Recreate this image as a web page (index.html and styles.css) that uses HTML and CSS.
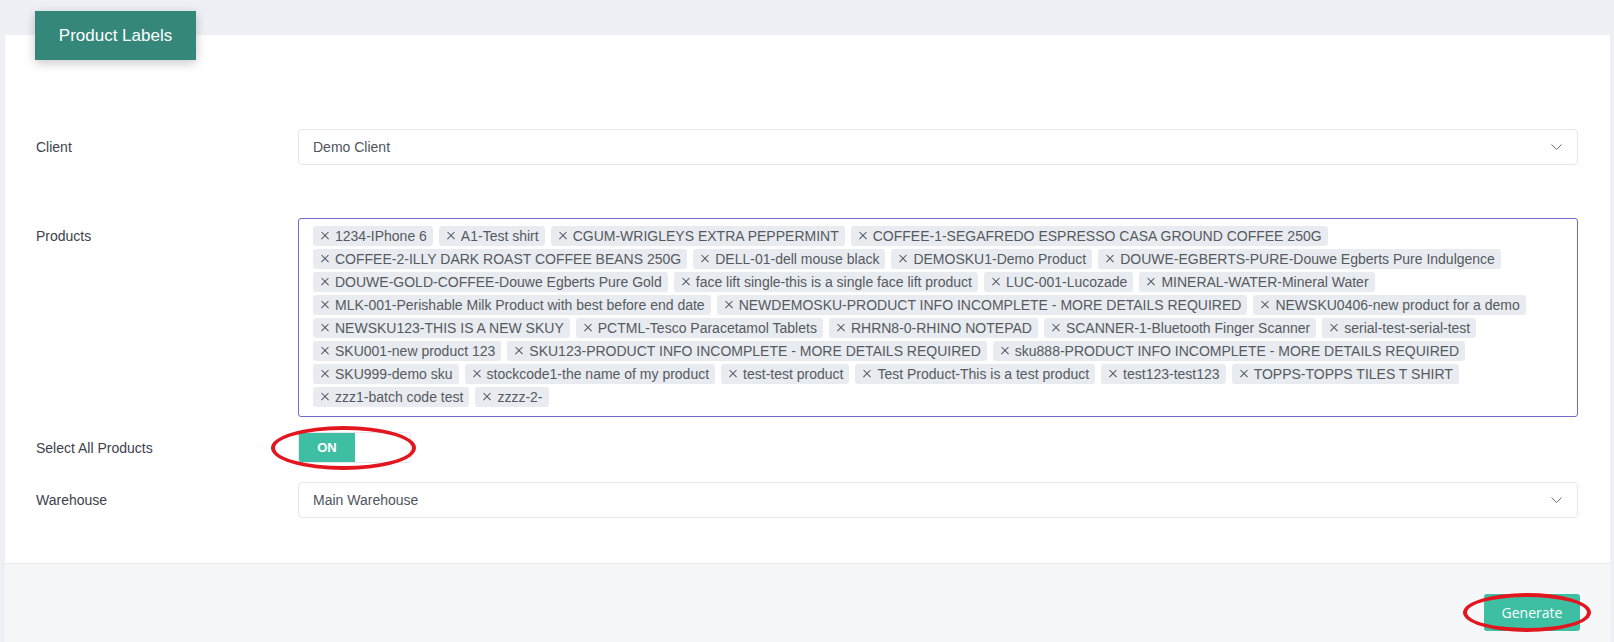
FILE: index.html
```html
<!DOCTYPE html>
<html lang="en">
<head>
    <meta charset="UTF-8">
    <meta name="viewport" content="width=device-width, initial-scale=1.0">
    <title>Product Labels</title>
    <link rel="stylesheet" href="styles.css">
</head>

<body>
    <div class="card">
        <div class="card-tab">Product Labels</div>

        <div class="card-body">
            <div class="form-row row-client">
                <label>Client</label>
                <div class="select">
                    <span>Demo Client</span>
                    <svg class="chevron" width="11" height="6" viewBox="0 0 11 6"><polyline points="0.5,0.5 5.5,5.5 10.5,0.5" fill="none" stroke="#6b6f76" stroke-width="1"/></svg>
                </div>
            </div>

            <div class="form-row row-products">
                <label>Products</label>
                <div class="multi-select">
                    <span class="tag"><i></i>1234-IPhone 6</span>
                    <span class="tag"><i></i>A1-Test shirt</span>
                    <span class="tag"><i></i>CGUM-WRIGLEYS EXTRA PEPPERMINT</span>
                    <span class="tag"><i></i>COFFEE-1-SEGAFREDO ESPRESSO CASA GROUND COFFEE 250G</span>
                    <span class="tag"><i></i>COFFEE-2-ILLY DARK ROAST COFFEE BEANS 250G</span>
                    <span class="tag"><i></i>DELL-01-dell mouse black</span>
                    <span class="tag"><i></i>DEMOSKU1-Demo Product</span>
                    <span class="tag"><i></i>DOUWE-EGBERTS-PURE-Douwe Egberts Pure Indulgence</span>
                    <span class="tag"><i></i>DOUWE-GOLD-COFFEE-Douwe Egberts Pure Gold</span>
                    <span class="tag"><i></i>face lift single-this is a single face lift product</span>
                    <span class="tag"><i></i>LUC-001-Lucozade</span>
                    <span class="tag"><i></i>MINERAL-WATER-Mineral Water</span>
                    <span class="tag"><i></i>MLK-001-Perishable Milk Product with best before end date</span>
                    <span class="tag"><i></i>NEWDEMOSKU-PRODUCT INFO INCOMPLETE - MORE DETAILS REQUIRED</span>
                    <span class="tag"><i></i>NEWSKU0406-new product for a demo</span>
                    <span class="tag"><i></i>NEWSKU123-THIS IS A NEW SKUY</span>
                    <span class="tag"><i></i>PCTML-Tesco Paracetamol Tablets</span>
                    <span class="tag"><i></i>RHRN8-0-RHINO NOTEPAD</span>
                    <span class="tag"><i></i>SCANNER-1-Bluetooth Finger Scanner</span>
                    <span class="tag"><i></i>serial-test-serial-test</span>
                    <span class="tag"><i></i>SKU001-new product 123</span>
                    <span class="tag"><i></i>SKU123-PRODUCT INFO INCOMPLETE - MORE DETAILS REQUIRED</span>
                    <span class="tag"><i></i>sku888-PRODUCT INFO INCOMPLETE - MORE DETAILS REQUIRED</span>
                    <span class="tag"><i></i>SKU999-demo sku</span>
                    <span class="tag"><i></i>stockcode1-the name of my product</span>
                    <span class="tag"><i></i>test-test product</span>
                    <span class="tag"><i></i>Test Product-This is a test product</span>
                    <span class="tag"><i></i>test123-test123</span>
                    <span class="tag"><i></i>TOPPS-TOPPS TILES T SHIRT</span>
                    <span class="tag"><i></i>zzz1-batch code test</span>
                    <span class="tag"><i></i>zzzz-2-</span>
                </div>
            </div>

            <div class="form-row row-toggle">
                <label>Select All Products</label>
                <div class="marked">
                    <div class="switch">
                        <span class="switch-on">ON</span>
                        <span class="switch-knob"></span>
                    </div>
                    <span class="mark mark-toggle"></span>
                </div>
            </div>

            <div class="form-row row-warehouse">
                <label>Warehouse</label>
                <div class="select">
                    <span>Main Warehouse</span>
                    <svg class="chevron" width="11" height="6" viewBox="0 0 11 6"><polyline points="0.5,0.5 5.5,5.5 10.5,0.5" fill="none" stroke="#6b6f76" stroke-width="1"/></svg>
                </div>
            </div>
        </div>

        <div class="card-footer">
            <div class="marked">
                <button type="button" class="button">Generate</button>
                <span class="mark mark-button"></span>
            </div>
        </div>
    </div>
</body>
</html>
```

FILE: styles.css
```css
* {
    box-sizing: border-box;
}

body {
    font-family: 'Liberation Sans', Arial, sans-serif;
    background: #eef0f5;
    margin: 0;
    padding: 35px 4px 0 5px;
    overflow: hidden;
}

.card {
    position: relative;
    background: #ffffff;
}

.card-tab {
    position: absolute;
    top: -24px;
    left: 30px;
    width: 161px;
    height: 49px;
    background: #35877a;
    color: #ffffff;
    font-size: 17px;
    line-height: 49px;
    text-align: center;
    box-shadow: 0 3px 10px rgba(0, 0, 0, 0.22);
}

.card-body {
    padding: 94px 32px 45px 31px;
}

.form-row {
    display: grid;
    grid-template-columns: 262px 1fr;
}

.form-row label {
    font-size: 14px;
    line-height: 20px;
    padding-top: 8px;
    color: #3d414b;
}

.row-client {
    margin-bottom: 53px;
}

.row-products {
    margin-bottom: 15px;
}

.row-toggle {
    margin-bottom: 19px;
    align-items: center;
}

.row-toggle label {
    padding-top: 0;
}

.select {
    display: flex;
    align-items: center;
    justify-content: space-between;
    height: 36px;
    padding: 0 15px 0 14px;
    border: 1px solid #e5e7eb;
    border-radius: 4px;
    font-size: 14px;
    color: #50555d;
}

.chevron {
    display: block;
}

.multi-select {
    display: flex;
    flex-wrap: wrap;
    gap: 3px 6px;
    padding: 7px 14px 9px 14px;
    border: 1px solid #7469d0;
    border-radius: 3px;
}

.tag {
    display: flex;
    align-items: center;
    background: #e8ebef;
    border-radius: 3px;
    padding: 0 6px 0 8px;
    font-size: 14px;
    line-height: 20px;
    color: #555a61;
    white-space: nowrap;
}

/* close cross drawn with two thin bars */
.tag i {
    position: relative;
    display: block;
    width: 8px;
    height: 8px;
    margin-right: 6px;
}

.tag i::before,
.tag i::after {
    content: "";
    position: absolute;
    left: -1px;
    top: 3.4px;
    width: 10px;
    height: 1.2px;
    background: #4d5259;
    transform: rotate(45deg);
}

.tag i::after {
    transform: rotate(-45deg);
}

.marked {
    position: relative;
    width: max-content;
}

.switch {
    display: flex;
    width: 113px;
    height: 31px;
    border: 1px solid #e6e8eb;
    border-radius: 3px;
    overflow: hidden;
}

.switch-on {
    width: 56px;
    background: #3ebea3;
    color: #ffffff;
    font-size: 13px;
    font-weight: bold;
    line-height: 29px;
    text-align: center;
}

.switch-knob {
    flex: 1;
    background: #ffffff;
}

.mark {
    position: absolute;
    border: 4px solid #e3161f;
    border-radius: 50%;
    pointer-events: none;
}

.mark-toggle {
    left: -27px;
    top: -6px;
    width: 145px;
    height: 44px;
}

.mark-button {
    left: -21px;
    top: -1px;
    width: 128px;
    height: 39px;
}

.card-footer {
    display: flex;
    justify-content: flex-end;
    background: #f6f7f9;
    border-top: 1px solid #e6e8ec;
    padding: 30px 30px 20px;
}

.button {
    display: block;
    width: 96px;
    height: 37px;
    background: #3ebea3;
    color: #ffffff;
    border: none;
    border-radius: 3px;
    font-family: 'Open Sans', sans-serif;
    font-size: 14px;
    cursor: pointer;
}
```
